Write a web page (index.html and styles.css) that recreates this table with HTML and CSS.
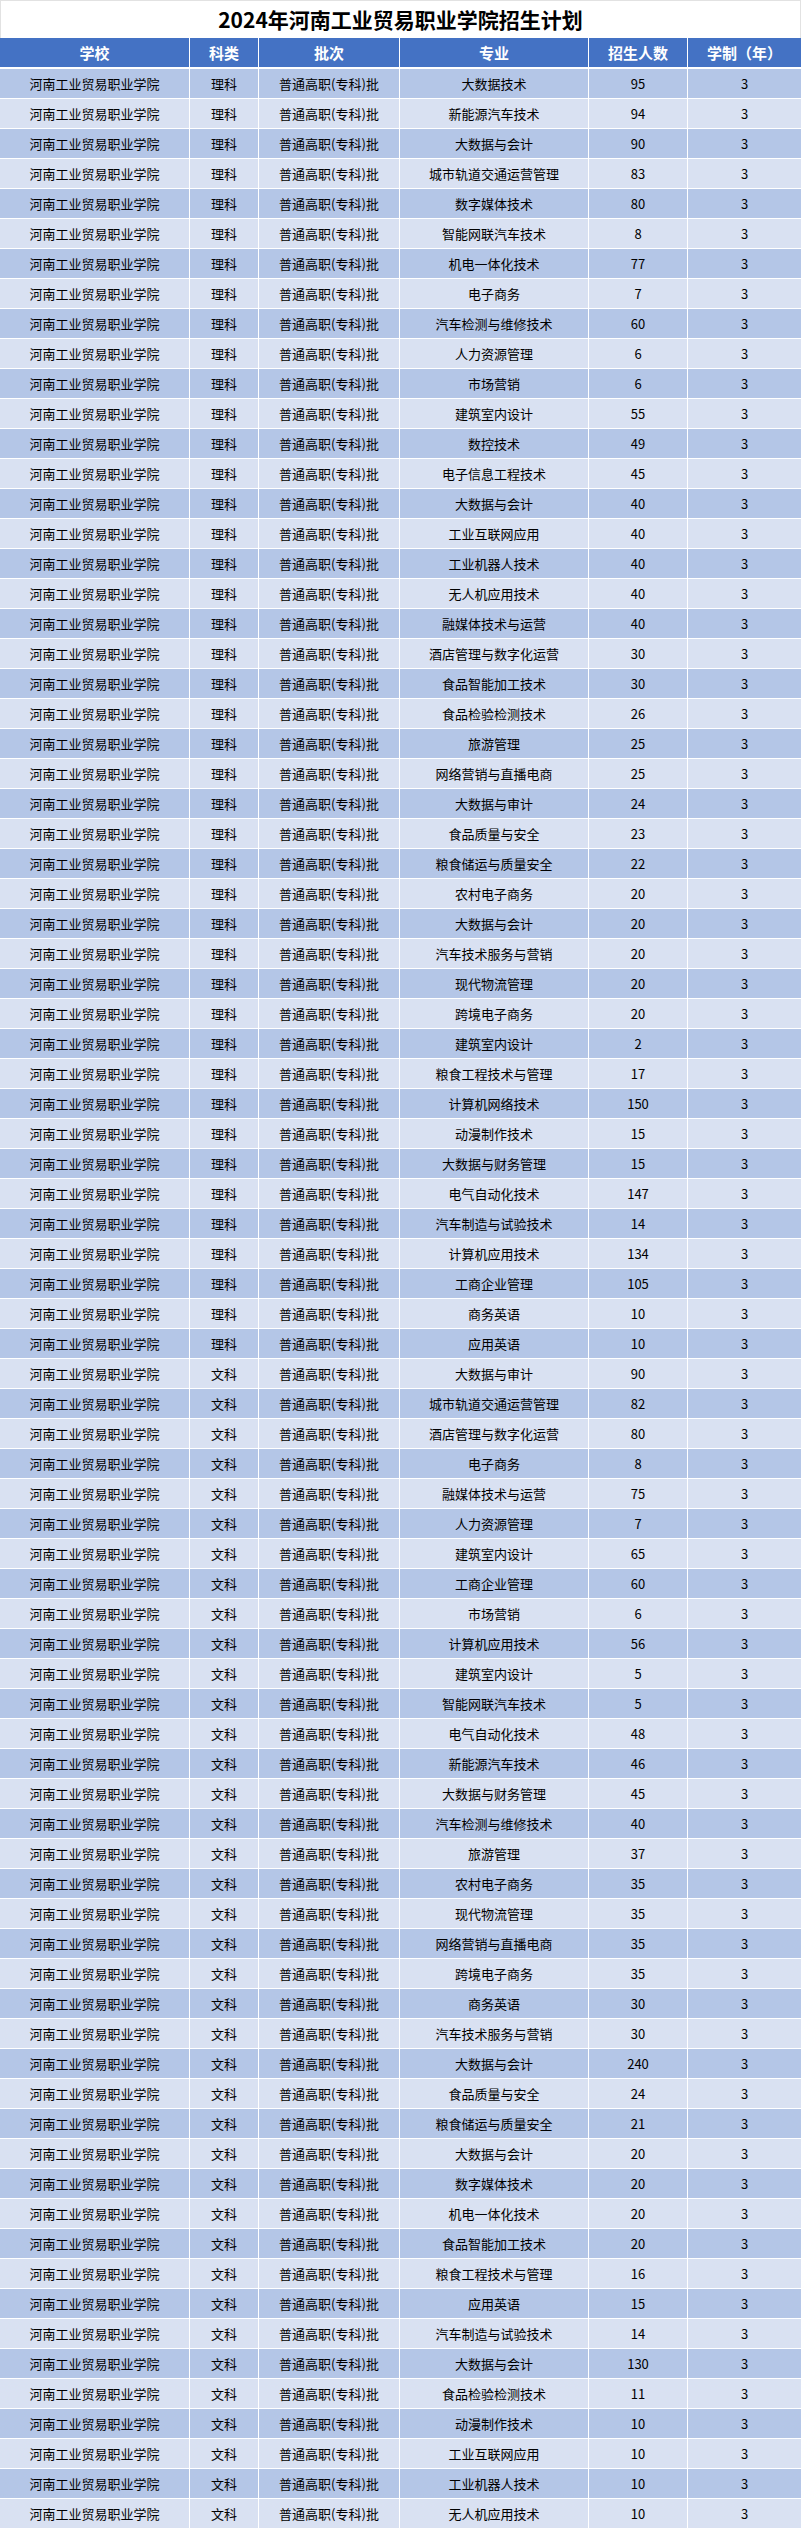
FILE: index.html
```html
<!DOCTYPE html>
<html lang="zh-CN">
<head>
<meta charset="utf-8">
<title>2024年河南工业贸易职业学院招生计划</title>
<link rel="stylesheet" href="styles.css">
</head>
<body>
<div class="sheet">
  <div class="title">2024年河南工业贸易职业学院招生计划</div>
  <div class="row head"><div>学校</div><div>科类</div><div>批次</div><div>专业</div><div>招生人数</div><div>学制（年）</div></div>
  <div class="body">
    <div class="row odd"><div>河南工业贸易职业学院</div><div>理科</div><div>普通高职(专科)批</div><div>大数据技术</div><div>95</div><div>3</div></div>
    <div class="row even"><div>河南工业贸易职业学院</div><div>理科</div><div>普通高职(专科)批</div><div>新能源汽车技术</div><div>94</div><div>3</div></div>
    <div class="row odd"><div>河南工业贸易职业学院</div><div>理科</div><div>普通高职(专科)批</div><div>大数据与会计</div><div>90</div><div>3</div></div>
    <div class="row even"><div>河南工业贸易职业学院</div><div>理科</div><div>普通高职(专科)批</div><div>城市轨道交通运营管理</div><div>83</div><div>3</div></div>
    <div class="row odd"><div>河南工业贸易职业学院</div><div>理科</div><div>普通高职(专科)批</div><div>数字媒体技术</div><div>80</div><div>3</div></div>
    <div class="row even"><div>河南工业贸易职业学院</div><div>理科</div><div>普通高职(专科)批</div><div>智能网联汽车技术</div><div>8</div><div>3</div></div>
    <div class="row odd"><div>河南工业贸易职业学院</div><div>理科</div><div>普通高职(专科)批</div><div>机电一体化技术</div><div>77</div><div>3</div></div>
    <div class="row even"><div>河南工业贸易职业学院</div><div>理科</div><div>普通高职(专科)批</div><div>电子商务</div><div>7</div><div>3</div></div>
    <div class="row odd"><div>河南工业贸易职业学院</div><div>理科</div><div>普通高职(专科)批</div><div>汽车检测与维修技术</div><div>60</div><div>3</div></div>
    <div class="row even"><div>河南工业贸易职业学院</div><div>理科</div><div>普通高职(专科)批</div><div>人力资源管理</div><div>6</div><div>3</div></div>
    <div class="row odd"><div>河南工业贸易职业学院</div><div>理科</div><div>普通高职(专科)批</div><div>市场营销</div><div>6</div><div>3</div></div>
    <div class="row even"><div>河南工业贸易职业学院</div><div>理科</div><div>普通高职(专科)批</div><div>建筑室内设计</div><div>55</div><div>3</div></div>
    <div class="row odd"><div>河南工业贸易职业学院</div><div>理科</div><div>普通高职(专科)批</div><div>数控技术</div><div>49</div><div>3</div></div>
    <div class="row even"><div>河南工业贸易职业学院</div><div>理科</div><div>普通高职(专科)批</div><div>电子信息工程技术</div><div>45</div><div>3</div></div>
    <div class="row odd"><div>河南工业贸易职业学院</div><div>理科</div><div>普通高职(专科)批</div><div>大数据与会计</div><div>40</div><div>3</div></div>
    <div class="row even"><div>河南工业贸易职业学院</div><div>理科</div><div>普通高职(专科)批</div><div>工业互联网应用</div><div>40</div><div>3</div></div>
    <div class="row odd"><div>河南工业贸易职业学院</div><div>理科</div><div>普通高职(专科)批</div><div>工业机器人技术</div><div>40</div><div>3</div></div>
    <div class="row even"><div>河南工业贸易职业学院</div><div>理科</div><div>普通高职(专科)批</div><div>无人机应用技术</div><div>40</div><div>3</div></div>
    <div class="row odd"><div>河南工业贸易职业学院</div><div>理科</div><div>普通高职(专科)批</div><div>融媒体技术与运营</div><div>40</div><div>3</div></div>
    <div class="row even"><div>河南工业贸易职业学院</div><div>理科</div><div>普通高职(专科)批</div><div>酒店管理与数字化运营</div><div>30</div><div>3</div></div>
    <div class="row odd"><div>河南工业贸易职业学院</div><div>理科</div><div>普通高职(专科)批</div><div>食品智能加工技术</div><div>30</div><div>3</div></div>
    <div class="row even"><div>河南工业贸易职业学院</div><div>理科</div><div>普通高职(专科)批</div><div>食品检验检测技术</div><div>26</div><div>3</div></div>
    <div class="row odd"><div>河南工业贸易职业学院</div><div>理科</div><div>普通高职(专科)批</div><div>旅游管理</div><div>25</div><div>3</div></div>
    <div class="row even"><div>河南工业贸易职业学院</div><div>理科</div><div>普通高职(专科)批</div><div>网络营销与直播电商</div><div>25</div><div>3</div></div>
    <div class="row odd"><div>河南工业贸易职业学院</div><div>理科</div><div>普通高职(专科)批</div><div>大数据与审计</div><div>24</div><div>3</div></div>
    <div class="row even"><div>河南工业贸易职业学院</div><div>理科</div><div>普通高职(专科)批</div><div>食品质量与安全</div><div>23</div><div>3</div></div>
    <div class="row odd"><div>河南工业贸易职业学院</div><div>理科</div><div>普通高职(专科)批</div><div>粮食储运与质量安全</div><div>22</div><div>3</div></div>
    <div class="row even"><div>河南工业贸易职业学院</div><div>理科</div><div>普通高职(专科)批</div><div>农村电子商务</div><div>20</div><div>3</div></div>
    <div class="row odd"><div>河南工业贸易职业学院</div><div>理科</div><div>普通高职(专科)批</div><div>大数据与会计</div><div>20</div><div>3</div></div>
    <div class="row even"><div>河南工业贸易职业学院</div><div>理科</div><div>普通高职(专科)批</div><div>汽车技术服务与营销</div><div>20</div><div>3</div></div>
    <div class="row odd"><div>河南工业贸易职业学院</div><div>理科</div><div>普通高职(专科)批</div><div>现代物流管理</div><div>20</div><div>3</div></div>
    <div class="row even"><div>河南工业贸易职业学院</div><div>理科</div><div>普通高职(专科)批</div><div>跨境电子商务</div><div>20</div><div>3</div></div>
    <div class="row odd"><div>河南工业贸易职业学院</div><div>理科</div><div>普通高职(专科)批</div><div>建筑室内设计</div><div>2</div><div>3</div></div>
    <div class="row even"><div>河南工业贸易职业学院</div><div>理科</div><div>普通高职(专科)批</div><div>粮食工程技术与管理</div><div>17</div><div>3</div></div>
    <div class="row odd"><div>河南工业贸易职业学院</div><div>理科</div><div>普通高职(专科)批</div><div>计算机网络技术</div><div>150</div><div>3</div></div>
    <div class="row even"><div>河南工业贸易职业学院</div><div>理科</div><div>普通高职(专科)批</div><div>动漫制作技术</div><div>15</div><div>3</div></div>
    <div class="row odd"><div>河南工业贸易职业学院</div><div>理科</div><div>普通高职(专科)批</div><div>大数据与财务管理</div><div>15</div><div>3</div></div>
    <div class="row even"><div>河南工业贸易职业学院</div><div>理科</div><div>普通高职(专科)批</div><div>电气自动化技术</div><div>147</div><div>3</div></div>
    <div class="row odd"><div>河南工业贸易职业学院</div><div>理科</div><div>普通高职(专科)批</div><div>汽车制造与试验技术</div><div>14</div><div>3</div></div>
    <div class="row even"><div>河南工业贸易职业学院</div><div>理科</div><div>普通高职(专科)批</div><div>计算机应用技术</div><div>134</div><div>3</div></div>
    <div class="row odd"><div>河南工业贸易职业学院</div><div>理科</div><div>普通高职(专科)批</div><div>工商企业管理</div><div>105</div><div>3</div></div>
    <div class="row even"><div>河南工业贸易职业学院</div><div>理科</div><div>普通高职(专科)批</div><div>商务英语</div><div>10</div><div>3</div></div>
    <div class="row odd"><div>河南工业贸易职业学院</div><div>理科</div><div>普通高职(专科)批</div><div>应用英语</div><div>10</div><div>3</div></div>
    <div class="row even"><div>河南工业贸易职业学院</div><div>文科</div><div>普通高职(专科)批</div><div>大数据与审计</div><div>90</div><div>3</div></div>
    <div class="row odd"><div>河南工业贸易职业学院</div><div>文科</div><div>普通高职(专科)批</div><div>城市轨道交通运营管理</div><div>82</div><div>3</div></div>
    <div class="row even"><div>河南工业贸易职业学院</div><div>文科</div><div>普通高职(专科)批</div><div>酒店管理与数字化运营</div><div>80</div><div>3</div></div>
    <div class="row odd"><div>河南工业贸易职业学院</div><div>文科</div><div>普通高职(专科)批</div><div>电子商务</div><div>8</div><div>3</div></div>
    <div class="row even"><div>河南工业贸易职业学院</div><div>文科</div><div>普通高职(专科)批</div><div>融媒体技术与运营</div><div>75</div><div>3</div></div>
    <div class="row odd"><div>河南工业贸易职业学院</div><div>文科</div><div>普通高职(专科)批</div><div>人力资源管理</div><div>7</div><div>3</div></div>
    <div class="row even"><div>河南工业贸易职业学院</div><div>文科</div><div>普通高职(专科)批</div><div>建筑室内设计</div><div>65</div><div>3</div></div>
    <div class="row odd"><div>河南工业贸易职业学院</div><div>文科</div><div>普通高职(专科)批</div><div>工商企业管理</div><div>60</div><div>3</div></div>
    <div class="row even"><div>河南工业贸易职业学院</div><div>文科</div><div>普通高职(专科)批</div><div>市场营销</div><div>6</div><div>3</div></div>
    <div class="row odd"><div>河南工业贸易职业学院</div><div>文科</div><div>普通高职(专科)批</div><div>计算机应用技术</div><div>56</div><div>3</div></div>
    <div class="row even"><div>河南工业贸易职业学院</div><div>文科</div><div>普通高职(专科)批</div><div>建筑室内设计</div><div>5</div><div>3</div></div>
    <div class="row odd"><div>河南工业贸易职业学院</div><div>文科</div><div>普通高职(专科)批</div><div>智能网联汽车技术</div><div>5</div><div>3</div></div>
    <div class="row even"><div>河南工业贸易职业学院</div><div>文科</div><div>普通高职(专科)批</div><div>电气自动化技术</div><div>48</div><div>3</div></div>
    <div class="row odd"><div>河南工业贸易职业学院</div><div>文科</div><div>普通高职(专科)批</div><div>新能源汽车技术</div><div>46</div><div>3</div></div>
    <div class="row even"><div>河南工业贸易职业学院</div><div>文科</div><div>普通高职(专科)批</div><div>大数据与财务管理</div><div>45</div><div>3</div></div>
    <div class="row odd"><div>河南工业贸易职业学院</div><div>文科</div><div>普通高职(专科)批</div><div>汽车检测与维修技术</div><div>40</div><div>3</div></div>
    <div class="row even"><div>河南工业贸易职业学院</div><div>文科</div><div>普通高职(专科)批</div><div>旅游管理</div><div>37</div><div>3</div></div>
    <div class="row odd"><div>河南工业贸易职业学院</div><div>文科</div><div>普通高职(专科)批</div><div>农村电子商务</div><div>35</div><div>3</div></div>
    <div class="row even"><div>河南工业贸易职业学院</div><div>文科</div><div>普通高职(专科)批</div><div>现代物流管理</div><div>35</div><div>3</div></div>
    <div class="row odd"><div>河南工业贸易职业学院</div><div>文科</div><div>普通高职(专科)批</div><div>网络营销与直播电商</div><div>35</div><div>3</div></div>
    <div class="row even"><div>河南工业贸易职业学院</div><div>文科</div><div>普通高职(专科)批</div><div>跨境电子商务</div><div>35</div><div>3</div></div>
    <div class="row odd"><div>河南工业贸易职业学院</div><div>文科</div><div>普通高职(专科)批</div><div>商务英语</div><div>30</div><div>3</div></div>
    <div class="row even"><div>河南工业贸易职业学院</div><div>文科</div><div>普通高职(专科)批</div><div>汽车技术服务与营销</div><div>30</div><div>3</div></div>
    <div class="row odd"><div>河南工业贸易职业学院</div><div>文科</div><div>普通高职(专科)批</div><div>大数据与会计</div><div>240</div><div>3</div></div>
    <div class="row even"><div>河南工业贸易职业学院</div><div>文科</div><div>普通高职(专科)批</div><div>食品质量与安全</div><div>24</div><div>3</div></div>
    <div class="row odd"><div>河南工业贸易职业学院</div><div>文科</div><div>普通高职(专科)批</div><div>粮食储运与质量安全</div><div>21</div><div>3</div></div>
    <div class="row even"><div>河南工业贸易职业学院</div><div>文科</div><div>普通高职(专科)批</div><div>大数据与会计</div><div>20</div><div>3</div></div>
    <div class="row odd"><div>河南工业贸易职业学院</div><div>文科</div><div>普通高职(专科)批</div><div>数字媒体技术</div><div>20</div><div>3</div></div>
    <div class="row even"><div>河南工业贸易职业学院</div><div>文科</div><div>普通高职(专科)批</div><div>机电一体化技术</div><div>20</div><div>3</div></div>
    <div class="row odd"><div>河南工业贸易职业学院</div><div>文科</div><div>普通高职(专科)批</div><div>食品智能加工技术</div><div>20</div><div>3</div></div>
    <div class="row even"><div>河南工业贸易职业学院</div><div>文科</div><div>普通高职(专科)批</div><div>粮食工程技术与管理</div><div>16</div><div>3</div></div>
    <div class="row odd"><div>河南工业贸易职业学院</div><div>文科</div><div>普通高职(专科)批</div><div>应用英语</div><div>15</div><div>3</div></div>
    <div class="row even"><div>河南工业贸易职业学院</div><div>文科</div><div>普通高职(专科)批</div><div>汽车制造与试验技术</div><div>14</div><div>3</div></div>
    <div class="row odd"><div>河南工业贸易职业学院</div><div>文科</div><div>普通高职(专科)批</div><div>大数据与会计</div><div>130</div><div>3</div></div>
    <div class="row even"><div>河南工业贸易职业学院</div><div>文科</div><div>普通高职(专科)批</div><div>食品检验检测技术</div><div>11</div><div>3</div></div>
    <div class="row odd"><div>河南工业贸易职业学院</div><div>文科</div><div>普通高职(专科)批</div><div>动漫制作技术</div><div>10</div><div>3</div></div>
    <div class="row even"><div>河南工业贸易职业学院</div><div>文科</div><div>普通高职(专科)批</div><div>工业互联网应用</div><div>10</div><div>3</div></div>
    <div class="row odd"><div>河南工业贸易职业学院</div><div>文科</div><div>普通高职(专科)批</div><div>工业机器人技术</div><div>10</div><div>3</div></div>
    <div class="row even"><div>河南工业贸易职业学院</div><div>文科</div><div>普通高职(专科)批</div><div>无人机应用技术</div><div>10</div><div>3</div></div>
  </div>
</div>
</body>
</html>
```
FILE: styles.css
```css
html, body {
  margin: 0;
  padding: 0;
  background: #ffffff;
}
body {
  font-family: "Noto Sans CJK SC", "Microsoft YaHei", "Noto Sans", sans-serif;
  color: #000000;
}
.sheet {
  width: 801px;
  display: flex;
  flex-direction: column;
}
.title {
  box-sizing: border-box;
  height: 38px;
  border: 1px solid #e2e2e2;
  border-bottom: none;
  display: flex;
  align-items: center;
  justify-content: center;
  font-size: 21px;
  font-weight: 700;
  color: #000;
  line-height: 1;
}
.row {
  display: grid;
  grid-template-columns: 189px 68px 140px 188px 98px 113px;
  column-gap: 1px;
  height: 29px;
}
.row > div {
  display: flex;
  align-items: center;
  justify-content: center;
  font-size: 13px;
  line-height: 1;
  white-space: nowrap;
}
.head {
  margin-bottom: 2px;
}
.head > div {
  background: #4472c4;
  color: #ffffff;
  font-weight: 700;
  font-size: 15px;
}
.body {
  display: flex;
  flex-direction: column;
  row-gap: 1px;
}
.odd > div {
  background: #b4c6e7;
}
.even > div {
  background: #d9e1f2;
}
```
